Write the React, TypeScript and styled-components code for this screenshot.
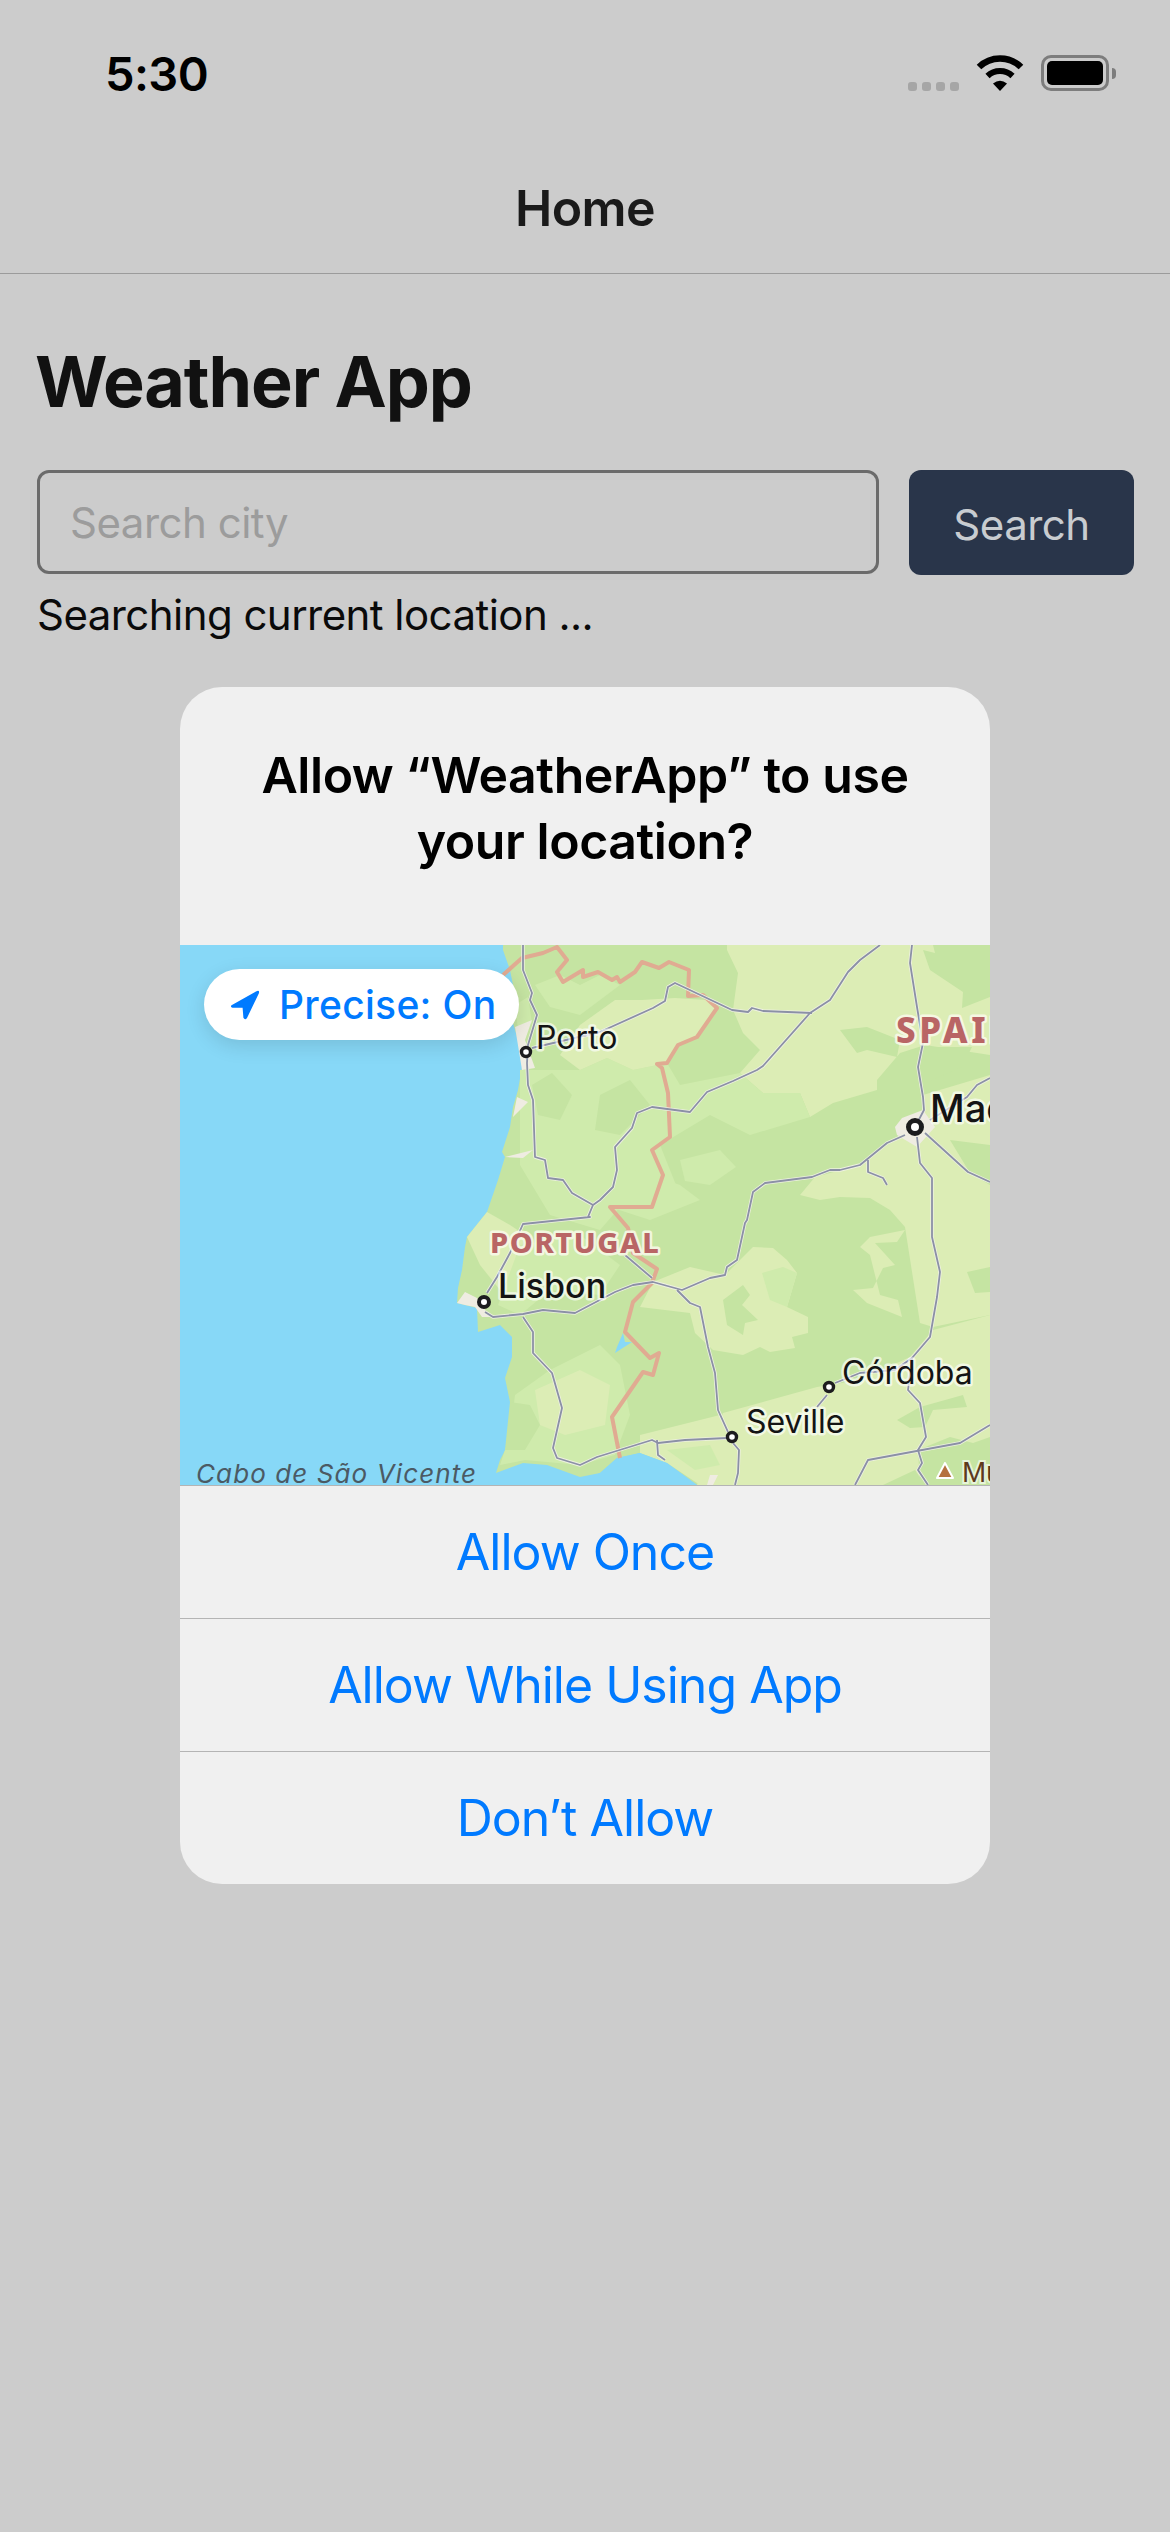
import styled, { createGlobalStyle } from 'styled-components'

const GlobalStyle = createGlobalStyle`
  html, body {
    margin: 0;
    padding: 0;
    background: #cccccc;
  }
  * {
    box-sizing: border-box;
  }
`

const WATER = '#87d8f7'
const DARK = '#c5e4a2'
const MID = '#cfebac'
const LIGHT = '#dcedb5'
const SAND = '#efece2'

// map shapes, in pixels of the 810x540 map
const land =
  '323,0 323,5 330,25 336,55 333,78 340,102 342,122 338,145 333,162 330,182 322,207 325,212 318,235 307,267 287,292 285,302 282,325 278,343 277,358 297,363 298,387 320,380 332,392 332,412 325,433 330,457 332,492 320,515 316,528 343,518 367,520 400,532 420,528 437,513 460,508 487,518 517,540 810,540 810,0'

const patches: [string, string][] = [
  [LIGHT, '547,0 810,0 810,110 745,100 720,108 697,135 697,145 653,158 630,172 620,148 583,148 560,128 580,105 563,88 553,65 558,28 547,5'],
  [DARK, '660,85 687,82 720,95 717,112 687,105 677,108'],
  [DARK, '743,5 755,8 753,0 810,0 810,52 782,63 783,47 750,25'],
  [DARK, '745,102 792,102 782,122 745,138 738,120'],
  [MID, '340,125 400,125 427,113 453,125 487,118 500,140 560,128 583,148 620,148 630,172 570,190 530,170 480,200 500,250 440,262 420,285 370,270 340,220'],
  [DARK, '420,150 450,135 470,160 440,190 415,185'],
  [DARK, '352,140 372,128 392,150 380,175 358,170'],
  [LIGHT, '400,80 435,55 462,55 495,53 527,55 537,63 517,92 498,100 487,118 453,125 427,113 400,125 380,110'],
  [MID, '355,40 380,30 400,40 420,30 440,40 400,70 370,62'],
  [MID, '335,60 348,52 352,78 338,84'],
  [LIGHT, '620,250 635,232 680,220 707,198 725,190 745,188 810,170 810,270 710,265 690,253 660,252 640,255'],
  [LIGHT, '743,150 810,130 810,190 745,188'],
  [DARK, '770,195 810,200 810,240 790,228'],
  [MID, '440,220 500,240 520,255 470,275 430,262'],
  [MID, '500,215 540,205 556,222 530,240 505,236'],
  [LIGHT, '287,292 307,267 330,280 345,290 340,320 320,345 300,320'],
  [MID, '340,300 400,290 440,320 420,350 370,345 340,370 318,360'],
  [MID, '335,450 370,425 420,400 440,420 450,470 435,510 400,520 345,515 320,520 330,490'],
  [LIGHT, '355,445 400,425 430,440 425,480 385,490 360,480'],
  [DARK, '330,457 350,460 360,480 345,505 325,505'],
  [LIGHT, '510,322 545,330 573,302 593,303 607,315 617,328 607,362 628,372 628,388 612,392 615,403 590,407 580,402 563,410 533,405 515,388 510,368 460,362 473,337'],
  [DARK, '543,355 563,340 570,350 562,360 578,375 565,378 563,390 547,380'],
  [MID, '582,328 603,322 617,328 607,362 590,355'],
  [LIGHT, '680,302 690,292 725,285 717,297 695,298 715,320 703,323 693,343 673,345 687,358 722,372 718,355 700,350 690,310'],
  [LIGHT, '710,265 725,282 740,378 753,382 810,370 810,265'],
  [DARK, '787,327 810,322 810,347 795,348'],
  [LIGHT, '517,540 543,468 590,455 637,442 680,435 730,412 753,385 810,370 810,540'],
  [LIGHT, '460,490 540,470 560,540 520,540 487,518 460,508'],
  [DARK, '717,475 740,462 783,450 787,462 753,465 745,482 730,483'],
  [DARK, '738,505 770,492 793,498 810,492 810,540 740,540'],
  [DARK, '703,540 735,525 745,540'],
  [MID, '487,505 530,500 540,520 515,525'],
  [SAND, '530,530 538,530 533,540 527,540'],
  [SAND, '277,358 285,347 297,353 310,372 302,372 295,362 285,360'],
  [SAND, '715,182 722,173 743,165 755,182 737,202 717,190'],
  [SAND, '335,82 352,75 345,95 355,123 342,125'],
  [SAND, '333,172 337,152 348,157'],
  [SAND, '325,212 353,205 343,213'],
  [WATER, '443,388 445,397 452,397 435,408 437,402'],
]

const border =
  '323,30 342,13 363,8 377,2 387,15 377,27 383,37 403,25 403,32 418,27 432,35 437,32 440,37 455,27 462,17 479,23 489,17 509,25 508,51 523,50 537,63 517,92 498,100 487,118 477,119 482,123 488,148 490,192 472,205 483,230 472,262 430,262 448,283 453,308 477,324 472,338 453,357 445,387 470,413 479,408 473,430 463,427 432,472 440,513'

const roads = [
  '343,0 343,25 352,48 350,55 357,70 348,100 347,118 348,140 353,155 355,212 365,215 368,233 383,235 392,248 413,260',
  '413,260 408,272 410,272 343,279 330,308 317,332 307,348',
  '413,260 420,255 433,242 437,225 435,202 452,183 457,168 472,162 510,167 527,147 553,136 577,125 583,121 630,68 650,55 668,27 680,15 700,0',
  '352,103 420,87 473,63 485,56 488,42 495,38 552,65 568,67 572,63 583,66 632,68',
  '732,0 730,18 737,62 743,98 738,122 743,152 744,165 735,182',
  '745,188 788,227 810,237',
  '750,175 787,152 797,140 810,133',
  '737,192 740,218 752,233 752,292 760,327 757,352 750,392 732,413 728,445 740,458 746,492 738,505 742,518 738,525 748,540',
  '725,190 707,198 680,220 660,225 650,225 632,232 585,238 573,247 567,275 565,278 557,315 547,322 545,330 530,333 502,345 473,337 453,340 435,347 395,368 363,365 343,369 313,372 305,367',
  '688,215 688,227 703,233 707,240',
  '445,310 472,333',
  '497,345 510,358 520,362 528,402 535,428 538,465 548,487',
  '547,493 505,495 478,498 472,495 417,512 400,520 377,513 373,503 382,463 372,428 353,408 353,387 343,372',
  '553,498 559,505 558,528 555,540',
  '477,495 478,510 485,515',
  '647,450 637,462',
  '655,438 680,428 715,425 732,413',
  '675,540 688,515 780,498 790,492 810,480',
]

const cityDots = [
  { x: 346, y: 107, r: 4.5, w: 3.4 },
  { x: 735, y: 182, r: 6.5, w: 5 },
  { x: 304, y: 357, r: 5, w: 4 },
  { x: 649, y: 442, r: 4.5, w: 3.4 },
  { x: 552, y: 492, r: 4.5, w: 3.4 },
]

function App() {
  return (
    <>
      <GlobalStyle />
      <Page>
        <Header>
          <StatusBar>
            <Time>5:30</Time>
            <StatusIcons>
              <SignalDots>
                <SignalDot />
                <SignalDot />
                <SignalDot />
                <SignalDot />
              </SignalDots>
              <svg width="48" height="36" viewBox="0 0 48 36">
                <path d="M3 12 A30 30 0 0 1 45 12" fill="none" stroke="#000" strokeWidth="6.5" />
                <path d="M11.5 21 A18 18 0 0 1 36.5 21" fill="none" stroke="#000" strokeWidth="6" />
                <path d="M17 28.5 Q24 23 31 28.5 L24 36 Z" fill="#000" />
              </svg>
              <Battery>
                <BatteryFill />
              </Battery>
              <BatteryNub />
            </StatusIcons>
          </StatusBar>
          <NavBar>Home</NavBar>
        </Header>
        <Content>
          <Title>Weather App</Title>
          <SearchRow>
            <SearchInput placeholder="Search city" readOnly />
            <SearchButton>Search</SearchButton>
          </SearchRow>
          <StatusText>Searching current location ...</StatusText>
          <Alert>
            <AlertTitle>
              Allow “WeatherApp” to use
              <br />
              your location?
            </AlertTitle>
            <MapBox>
              <svg width="810" height="540" viewBox="0 0 810 540" style={{ display: 'block' }}>
                <rect width="810" height="540" fill={WATER} />
                <polygon points={land} fill={DARK} />
                {patches.map(([fill, points], i) => (
                  <polygon key={i} points={points} fill={fill} />
                ))}
                <path d="M400 540 L420 528 L437 513 L460 508 L487 518 L517 540 Z" fill={WATER} />
                <polyline points={border} fill="none" stroke="#e0ab92" strokeWidth="4" strokeLinejoin="round" />
                {roads.map((points, i) => (
                  <polyline key={i} points={points} fill="none" stroke="#eef1e2" strokeWidth="3.4" strokeLinejoin="round" />
                ))}
                {roads.map((points, i) => (
                  <polyline key={i} points={points} fill="none" stroke="#8b90a6" strokeWidth="1.8" strokeLinejoin="round" />
                ))}
                {cityDots.map(d => (
                  <circle key={d.x} cx={d.x} cy={d.y} r={d.r} fill="#fff" stroke="#1c1c1e" strokeWidth={d.w} />
                ))}
                <polygon points="757,533 773,533 765,518" fill="#b5713f" stroke="#fff" strokeWidth="2" strokeLinejoin="round" />
                <MapLabel x="356" y="104" $size={32}>Porto</MapLabel>
                <MapLabel x="750" y="177" $size={38} $weight={500}>Madrid</MapLabel>
                <CountryLabel x="716" y="98" $size={35} $spacing={3.5}>SPAIN</CountryLabel>
                <CountryLabel x="310" y="308" $size={29} $spacing={1.6}>PORTUGAL</CountryLabel>
                <MapLabel x="318" y="353" $size={34} $weight={500}>Lisbon</MapLabel>
                <MapLabel x="662" y="439" $size={32}>Córdoba</MapLabel>
                <MapLabel x="566" y="488" $size={32}>Seville</MapLabel>
                <SeaLabel x="16" y="538">Cabo de São Vicente</SeaLabel>
                <PeakLabel x="782" y="537">Mulhacén</PeakLabel>
              </svg>
              <PrecisePill>
                <svg width="30" height="30" viewBox="0 0 30 30">
                  <path d="M1.5 15.2 L26.5 1.2 Q29.8 0 28.9 3.2 L17 28 Q15 30.6 13.4 27.8 L12.6 17.8 L2.6 17.8 Q0 17 1.5 15.2 Z" fill="#007aff" />
                </svg>
                <PreciseText>Precise: On</PreciseText>
              </PrecisePill>
            </MapBox>
            <AlertButton>Allow Once</AlertButton>
            <AlertButton>Allow While Using App</AlertButton>
            <AlertButton>Don’t Allow</AlertButton>
          </Alert>
        </Content>
      </Page>
    </>
  )
}

export default App

const Page = styled.div`
  width: 1170px;
  height: 2532px;
  overflow: hidden;
  background: #cccccc;
  font-family: Inter, 'Liberation Sans', sans-serif;
`

const Header = styled.header`
  height: 274px;
  border-bottom: 1.5px solid #9b9b9b;
`

const StatusBar = styled.div`
  height: 132px;
  padding: 49px 54px 0 105px;
  display: flex;
  justify-content: space-between;
  align-items: flex-start;
`

const Time = styled.div`
  font-size: 47px;
  line-height: 50px;
  font-weight: 600;
  color: #000;
  letter-spacing: -0.6px;
`

const StatusIcons = styled.div`
  display: flex;
  align-items: flex-end;
  margin-top: 6px;
`

const SignalDots = styled.div`
  display: flex;
  gap: 5px;
  margin-right: 17px;
`

const SignalDot = styled.span`
  width: 9px;
  height: 9px;
  border-radius: 3px;
  background: #a6a6a6;
`

const Battery = styled.div`
  width: 68px;
  height: 36px;
  margin-left: 17px;
  padding: 3px;
  border: 3px solid #7d7d7d;
  border-radius: 10px;
`

const BatteryFill = styled.div`
  width: 100%;
  height: 100%;
  border-radius: 5px;
  background: #000;
`

const BatteryNub = styled.div`
  width: 4px;
  height: 11px;
  margin: 0 0 12px 3px;
  border-radius: 0 5px 5px 0;
  background: #7d7d7d;
`

const NavBar = styled.div`
  height: 141px;
  padding-top: 10px;
  display: flex;
  align-items: center;
  justify-content: center;
  font-size: 50px;
  font-weight: 600;
  color: #1a1a1a;
  letter-spacing: -0.6px;
`

const Content = styled.main`
  padding: 0 36px 0 37px;
`

const Title = styled.h1`
  margin: 0 0 0 -2px;
  padding-top: 65px;
  font-size: 70px;
  line-height: 86px;
  font-weight: 700;
  color: #111111;
  letter-spacing: -1.1px;
`

const SearchRow = styled.div`
  display: flex;
  gap: 30px;
  margin-top: 45px;
`

const SearchInput = styled.input`
  width: 842px;
  height: 104px;
  padding: 0 30px;
  border: 3px solid #6b6b6b;
  border-radius: 12px;
  background: transparent;
  font-family: inherit;
  font-size: 42px;
  letter-spacing: -0.5px;
  outline: none;

  &::placeholder {
    color: #9c9c9c;
    opacity: 1;
  }
`

const SearchButton = styled.div`
  width: 225px;
  height: 105px;
  padding-top: 4px;
  display: flex;
  align-items: center;
  justify-content: center;
  border-radius: 12px;
  background: #29354a;
  color: #c8ccd0;
  font-size: 42px;
  letter-spacing: -0.5px;
`

const StatusText = styled.div`
  margin-top: 10px;
  font-size: 42px;
  line-height: 60px;
  letter-spacing: -0.55px;
  color: #0a0a0a;
`

const Alert = styled.section`
  width: 810px;
  margin: 42px 0 0 143px;
  border-radius: 42px;
  background: #f0f0f0;
  overflow: hidden;
`

const AlertTitle = styled.h2`
  margin: 0;
  height: 258px;
  padding-top: 55px;
  text-align: center;
  font-size: 50px;
  line-height: 66px;
  font-weight: 600;
  color: #000;
  letter-spacing: -0.45px;
`

const MapBox = styled.div`
  position: relative;
  height: 540px;
`

const MapLabel = styled.text<{ $size: number; $weight?: number }>`
  font-family: Inter, sans-serif;
  font-size: ${p => p.$size}px;
  font-weight: ${p => p.$weight ?? 400};
  fill: #141414;
  stroke: rgba(255, 255, 255, 0.65);
  stroke-width: 5px;
  paint-order: stroke;
  stroke-linejoin: round;
`

const CountryLabel = styled.text<{ $size: number; $spacing: number }>`
  font-family: 'Noto Sans', sans-serif;
  font-size: ${p => p.$size}px;
  font-weight: 800;
  letter-spacing: ${p => p.$spacing}px;
  fill: #b96565;
  stroke: rgba(250, 250, 235, 0.85);
  stroke-width: 5px;
  paint-order: stroke;
  stroke-linejoin: round;
`

const SeaLabel = styled.text`
  font-family: Inter, sans-serif;
  font-size: 26px;
  font-style: italic;
  letter-spacing: 1.1px;
  fill: #4b5a64;
`

const PeakLabel = styled.text`
  font-family: 'Liberation Sans', sans-serif;
  font-size: 29px;
  fill: #5e3a1c;
  stroke: rgba(255, 255, 255, 0.6);
  stroke-width: 4px;
  paint-order: stroke;
`

const PrecisePill = styled.div`
  position: absolute;
  top: 24px;
  left: 24px;
  width: 315px;
  height: 71px;
  padding-left: 26px;
  display: flex;
  align-items: center;
  gap: 19px;
  border-radius: 36px;
  background: #fff;
  box-shadow: 0 6px 20px rgba(0, 0, 0, 0.12);
`

const PreciseText = styled.span`
  font-size: 39px;
  font-weight: 500;
  color: #007aff;
  letter-spacing: 0.3px;
`

const AlertButton = styled.div`
  height: 133px;
  display: flex;
  align-items: center;
  justify-content: center;
  border-top: 1.5px solid #b4b4b4;
  font-size: 50px;
  color: #007aff;
  letter-spacing: -1px;
`
